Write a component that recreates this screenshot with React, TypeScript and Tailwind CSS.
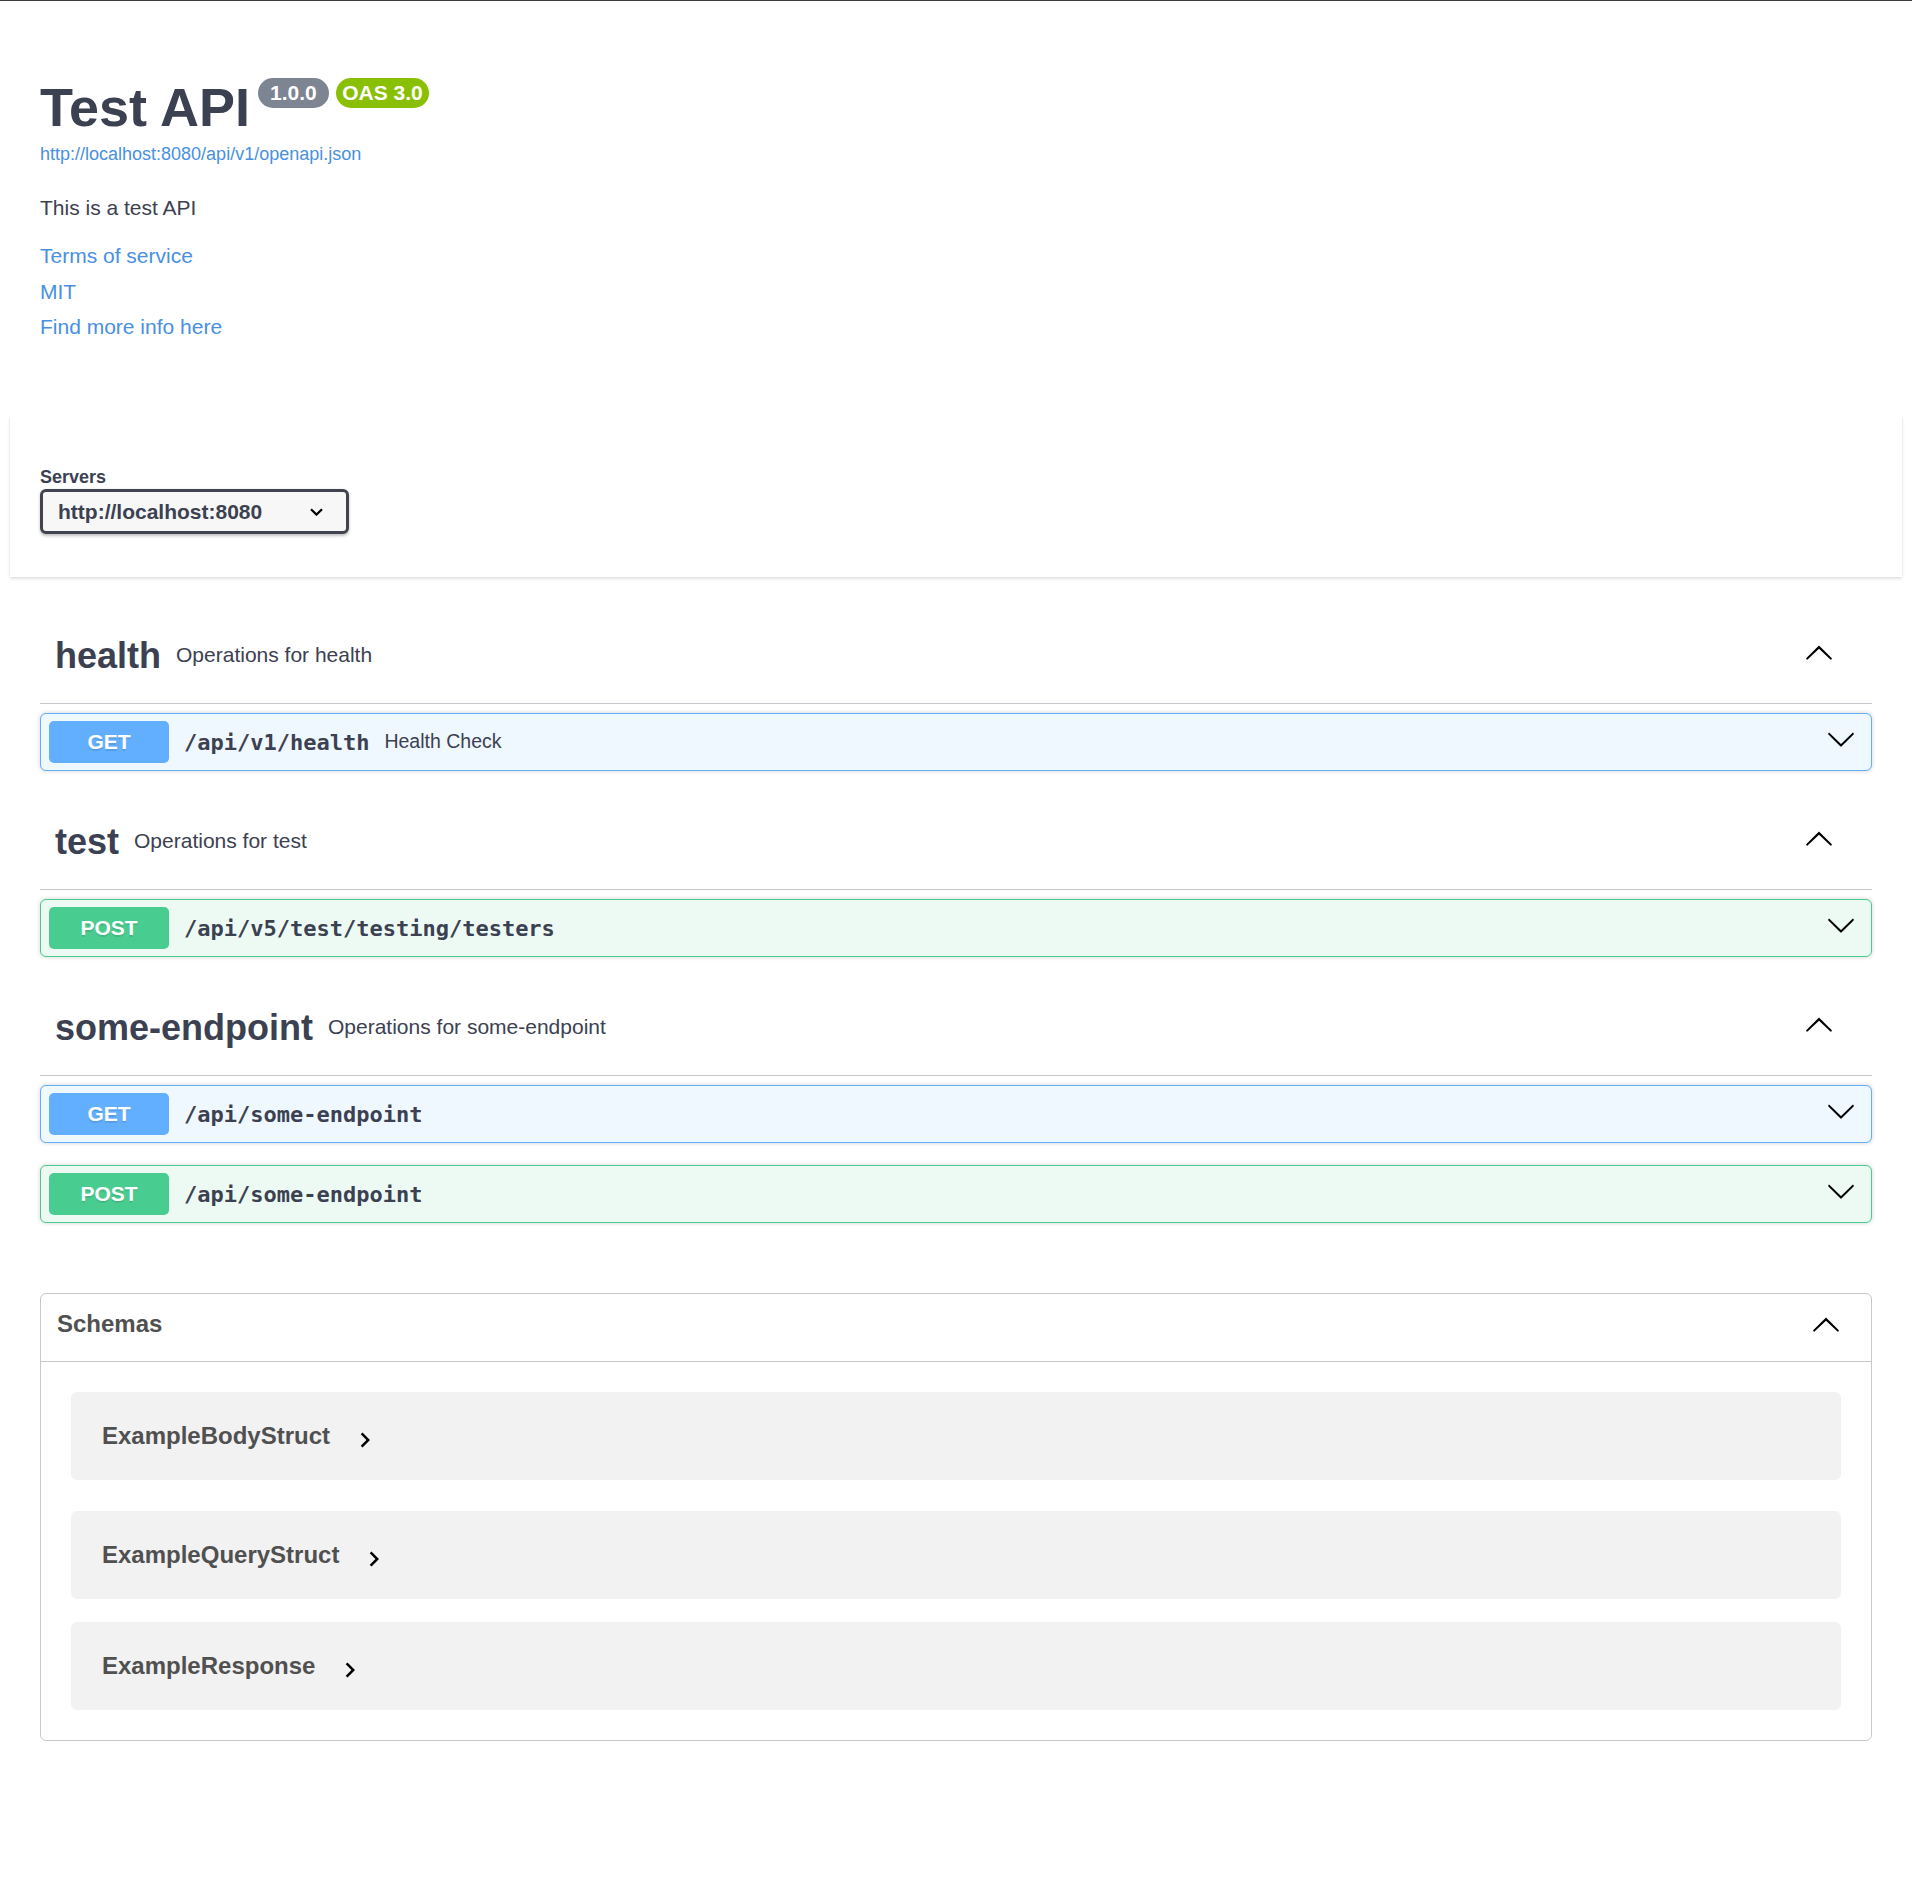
import React from 'react';

type Op = { method: 'GET' | 'POST'; path: string; summary?: string };
type Tag = { name: string; description: string; ops: Op[] };

const tags: Tag[] = [
    { name: 'health', description: 'Operations for health', ops: [{ method: 'GET', path: '/api/v1/health', summary: 'Health Check' }] },
    { name: 'test', description: 'Operations for test', ops: [{ method: 'POST', path: '/api/v5/test/testing/testers' }] },
    {
        name: 'some-endpoint',
        description: 'Operations for some-endpoint',
        ops: [
            { method: 'GET', path: '/api/some-endpoint' },
            { method: 'POST', path: '/api/some-endpoint' },
        ],
    },
];

const schemas = [
    { name: 'ExampleBodyStruct', mt: 'mt-[30px]' },
    { name: 'ExampleQueryStruct', mt: 'mt-[31px]' },
    { name: 'ExampleResponse', mt: 'mt-[23px]' },
];

const ArrowUp = ({ className = '' }: { className?: string }) => (
    <svg viewBox="0 0 20 20" className={'w-[30px] h-[30px] ' + className} fill="#000">
        <path d="M17.418 14.908c.272.268.709.268.979 0s.27-.701 0-.969l-7.908-7.83c-.27-.268-.707-.268-.979 0l-7.908 7.83c-.27.268-.27.701 0 .969.271.268.709.268.979 0L10 7.767l7.418 7.141z" />
    </svg>
);

const ArrowDown = ({ className = '' }: { className?: string }) => (
    <svg viewBox="0 0 20 20" className={'w-[30px] h-[30px] ' + className} fill="#000">
        <path d="M17.418 6.109c.272-.268.709-.268.979 0s.271.701 0 .969l-7.908 7.83c-.27.268-.707.268-.979 0l-7.908-7.83c-.27-.268-.27-.701 0-.969.271-.268.709-.268.979 0L10 13.25l7.418-7.141z" />
    </svg>
);

const OpBlock = ({ op }: { op: Op }) => {
    const isGet = op.method === 'GET';
    return (
        <div
            className={
                'h-[58px] mb-[22px] flex items-center pl-[8px] pr-[15px] rounded-[6px] border shadow-[0_0_4px_rgba(0,0,0,0.19)] ' +
                (isGet ? 'border-[#61affe] bg-[#eff7ff]' : 'border-[#49cc90] bg-[#edfaf4]')
            }
        >
            <div
                className={
                    'w-[120px] h-[42px] rounded-[5px] flex items-center justify-center text-white font-bold text-[21px] [text-shadow:0_1.5px_0_rgba(0,0,0,0.1)] ' +
                    (isGet ? 'bg-[#61affe]' : 'bg-[#49cc90]')
                }
            >
                {op.method}
            </div>
            <span className="px-[15px] font-['DejaVu_Sans_Mono',monospace] font-bold text-[22px] text-[#3b4151]">{op.path}</span>
            {op.summary && <span className="text-[19.5px] text-[#3b4151]">{op.summary}</span>}
            <div className="flex-1"></div>
            <ArrowDown className="mb-[6px]" />
        </div>
    );
};

export default function App() {
    return (
        <div className="min-h-[1900px] bg-white font-['Liberation_Sans',Arial,sans-serif] text-[#3b4151]">
            <div className="h-px bg-[#3d3d3d]"></div>

            {/* info */}
            <div className="px-[40px] pt-[76px]">
                <div className="flex items-start">
                    <h2 className="text-[54px] leading-[60px] font-bold">Test API</h2>
                    <span className="ml-[8px] mt-[1px] h-[30px] px-[12px] rounded-full bg-[#7d8492] text-white font-bold text-[21px] leading-[30px]">1.0.0</span>
                    <span className="ml-[7px] mt-[1px] h-[30px] px-[6.5px] rounded-full bg-[#89bf04] text-white font-bold text-[21px] leading-[30px]">OAS 3.0</span>
                </div>
                <a className="block mt-[7px] text-[18px] leading-[21px] text-[#4990e2]">http://localhost:8080/api/v1/openapi.json</a>
                <p className="mt-[31px] text-[21px] leading-[24px]">This is a test API</p>
                <a className="block mt-[24px] text-[21px] leading-[24px] text-[#4990e2]">Terms of service</a>
                <a className="block mt-[12px] text-[21px] leading-[24px] text-[#4990e2]">MIT</a>
                <a className="block mt-[11px] text-[21px] leading-[24px] text-[#4990e2]">Find more info here</a>
            </div>

            {/* servers */}
            <div className="mt-[76px] mx-[10px] bg-white shadow-[0_1.5px_3px_0_rgba(0,0,0,0.15)] px-[30px] pt-[52px] pb-[43px]">
                <div className="text-[18px] leading-[21px] font-bold">Servers</div>
                <div className="mt-[1px] w-[309px] h-[45px] border-[3px] border-[#41444e] rounded-[6px] bg-[#f7f7f7] shadow-[0_1.5px_3px_0_rgba(0,0,0,0.25)] flex items-center justify-between pl-[15px] pr-[23px]">
                    <span className="text-[21px] font-bold">http://localhost:8080</span>
                    <svg width="13" height="8" viewBox="0 0 13 8">
                        <path d="M1 1.2 L6.5 6.6 L12 1.2" fill="none" stroke="#000" strokeWidth="2.2" />
                    </svg>
                </div>
            </div>

            {/* operations */}
            <div className="px-[40px] mt-[30px]">
                {tags.map((tag) => (
                    <div key={tag.name}>
                        <div className="h-[97px] border-b border-[#c4c6cb] flex items-center pl-[15px] pr-[38px]">
                            <h3 className="text-[36px] leading-[41px] font-bold">{tag.name}</h3>
                            <small className="flex-1 pl-[15px] text-[21px]">{tag.description}</small>
                            <ArrowUp className="mb-[6px]" />
                        </div>
                        <div className="mt-[9px]">
                            {tag.ops.map((op) => (
                                <OpBlock key={op.method + op.path} op={op} />
                            ))}
                        </div>
                    </div>
                ))}

                {/* schemas */}
                <section className="mt-[70px] border border-[#c8c8c8] rounded-[6px] pb-[30px]">
                    <div className="h-[68px] border-b border-[#c8c8c8] flex items-center justify-between pl-[16px] pr-[30px] pb-[8px]">
                        <h4 className="text-[24px] font-bold text-[#505050]">Schemas</h4>
                        <ArrowUp />
                    </div>
                    {schemas.map((s) => (
                        <div key={s.name} className={s.mt + ' mx-[30px] h-[88px] rounded-[6px] bg-[#f2f2f2] flex items-center pl-[31px]'}>
                            <span className="text-[24px] font-bold text-[#505050]">{s.name}</span>
                            <svg viewBox="0 0 24 24" className="ml-[20px] mt-[8px] w-[30px] h-[30px]" fill="#000">
                                <path d="M10 6L8.59 7.41 13.17 12l-4.58 4.59L10 18l6-6z" />
                            </svg>
                        </div>
                    ))}
                </section>
            </div>
        </div>
    );
}
